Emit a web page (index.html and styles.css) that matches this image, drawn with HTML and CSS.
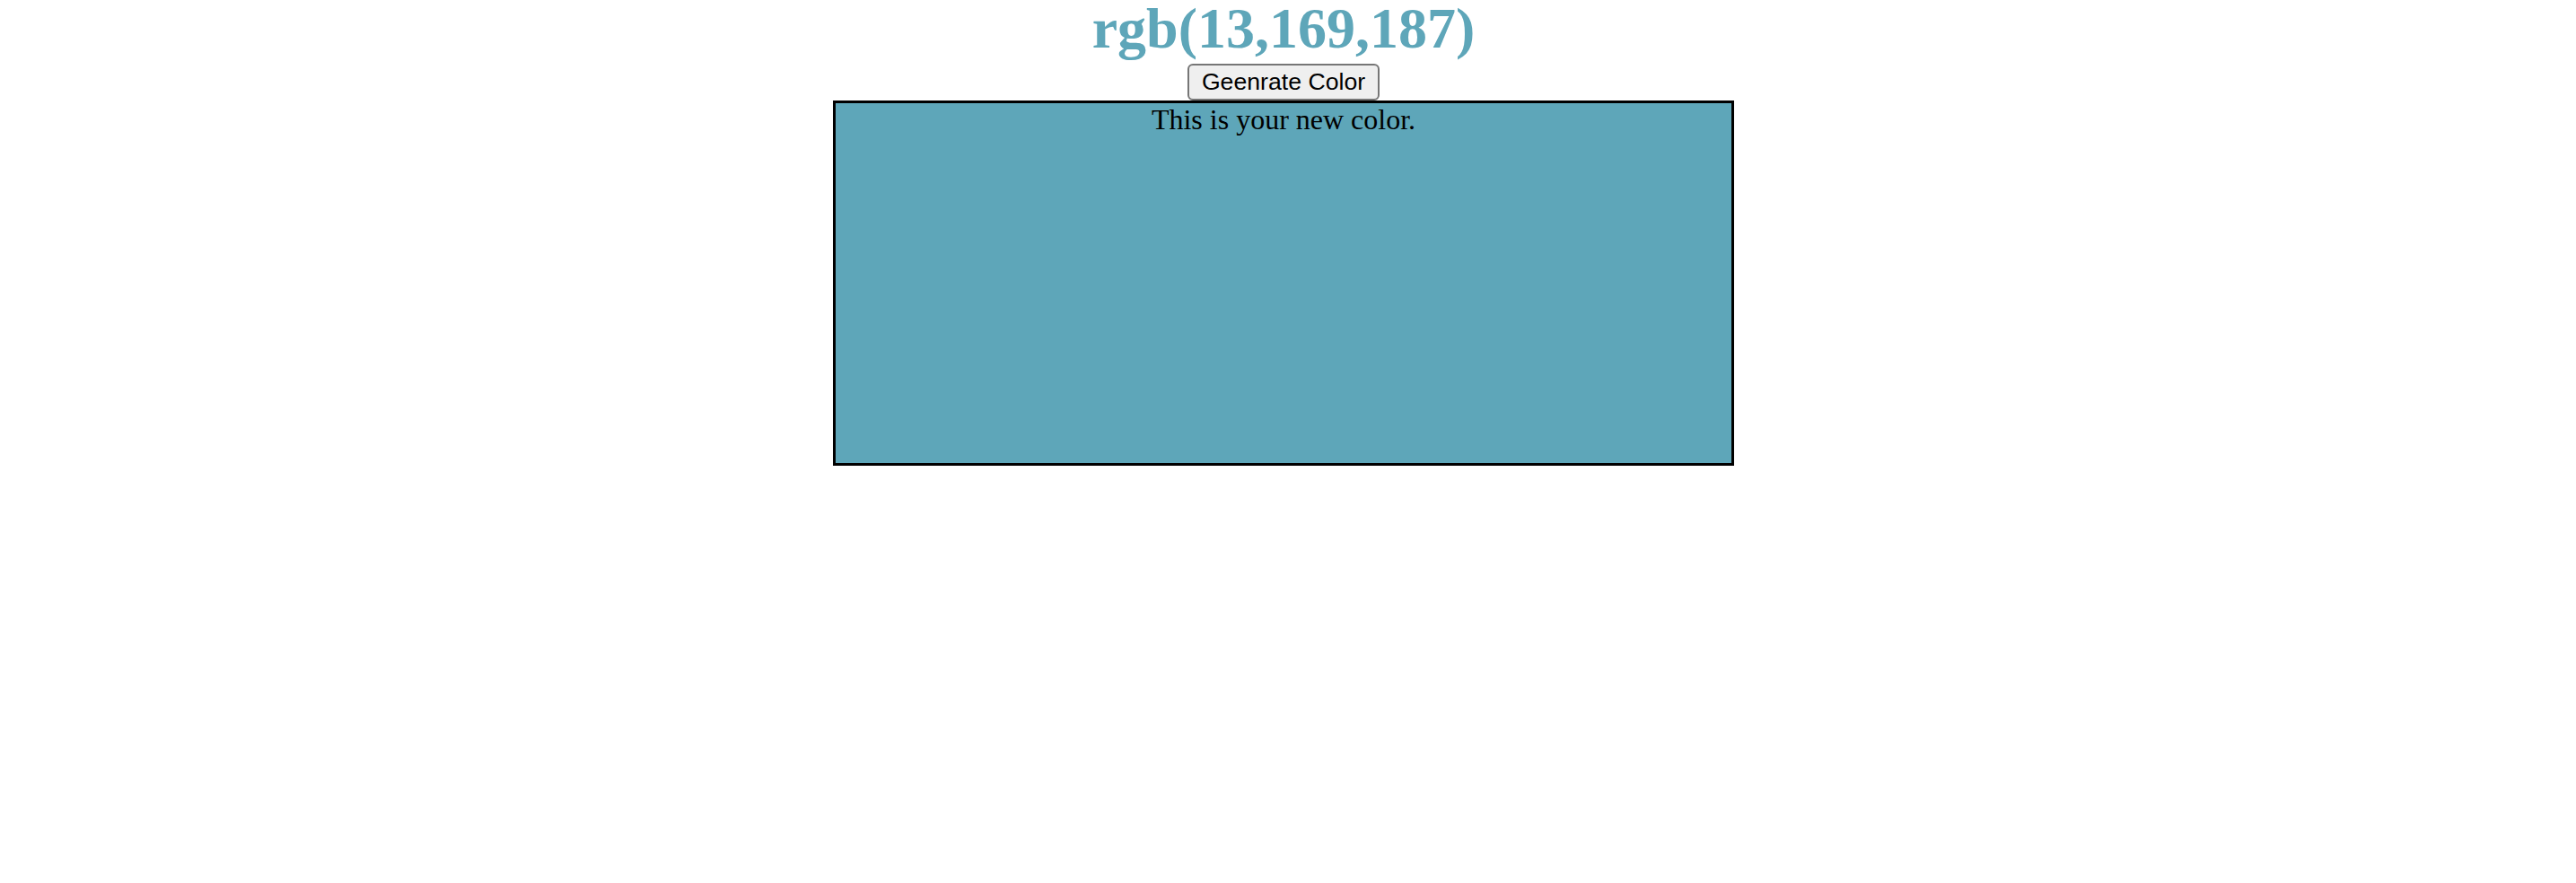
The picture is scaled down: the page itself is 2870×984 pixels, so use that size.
FILE: index.html
```html
<!DOCTYPE html>
<html>
<head>
<meta charset="utf-8">
<title>Color Generator</title>
<link rel="stylesheet" href="styles.css">
</head>
<body>
<main class="page">
  <h1 class="title">rgb(13,169,187)</h1>
  <button class="gen-btn" type="button">Geenrate Color</button>
  <div class="swatch">This is your new color.</div>
</main>
</body>
</html>
```
FILE: styles.css
```css
html, body {
  margin: 0;
  padding: 0;
  background: #ffffff;
}
body {
  padding-right: 10px;
  font-family: "Liberation Serif", "Times New Roman", serif;
}
.page {
  display: flex;
  flex-direction: column;
  align-items: center;
}
.title {
  margin: 0 0 7px 0;
  height: 64px;
  font-family: "Liberation Serif", "Times New Roman", serif;
  font-size: 64px;
  font-weight: bold;
  line-height: 64px;
  color: #5ea6b9;
  white-space: nowrap;
}
.gen-btn {
  box-sizing: border-box;
  height: 41px;
  margin: 0;
  padding: 2px 14px;
  font-family: "Liberation Sans", Arial, sans-serif;
  font-size: 26.67px;
  line-height: 31px;
  color: #000000;
  background: #efefef;
  border: 2px solid #767676;
  border-radius: 6px;
}
.swatch {
  box-sizing: content-box;
  width: 998px;
  height: 401px;
  border: 3px solid #000000;
  background: #5ea6b9;
  text-align: center;
  font-family: "Liberation Serif", "Times New Roman", serif;
  font-size: 32px;
  color: #000000;
}
```
